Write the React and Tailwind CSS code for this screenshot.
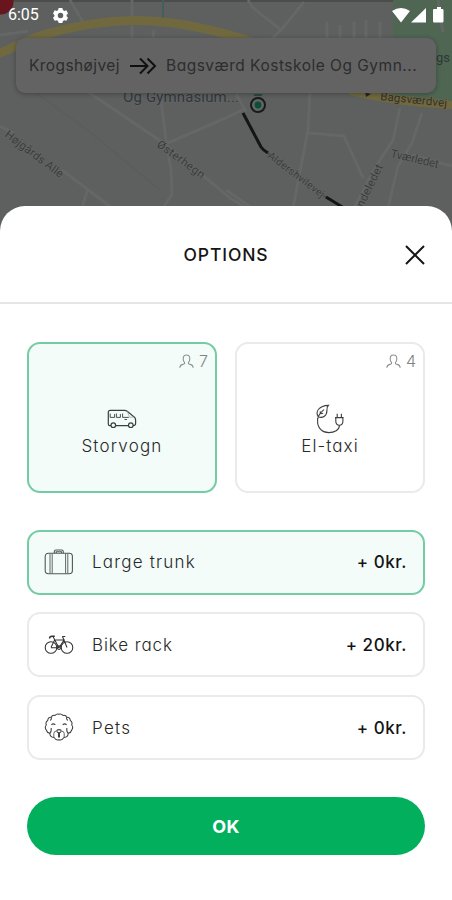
import React, { useState } from "react";
import clsx from "clsx";

const vehicles = [
    { id: "storvogn", name: "Storvogn", seats: 7, icon: VanIcon, text: "tracking-[1.2px]" },
    { id: "el", name: "El-taxi", seats: 4, icon: ElectricIcon, text: "tracking-[1.1px]" },
];

const extras = [
    { id: "trunk", name: "Large trunk", price: 0, icon: TrunkIcon, text: "tracking-[1.2px]" },
    { id: "bike", name: "Bike rack", price: 20, icon: BikeIcon, text: "tracking-[0.9px]" },
    { id: "pets", name: "Pets", price: 0, icon: DogIcon, text: "tracking-[1.3px]" },
];

function VanIcon() {
    return (
        <svg className="mb-[5px]" width="30" height="20" viewBox="0 0 30 20" fill="none" stroke="#3b403e" strokeWidth="1.2">
            <path d="M4 16.6H2.7Q1.3 16.6 1.3 15V3.2Q1.3 1.3 3.2 1.3H17.5Q19 1.3 20.2 2.2L26.2 7.2Q28.6 8.2 28.6 11V14.8Q28.6 16.6 26 16.6M8.6 16.6H21.5" />
            <circle cx="6.3" cy="16.2" r="2.3" />
            <circle cx="23.8" cy="16.2" r="2.3" />
            <path d="M3.2 4.5V8.4H7.6V5M9.4 4.5V8.4H13.4V5M15.6 4.5V8.4H21.8M17.5 10.5H20" strokeWidth="0.9" />
            <path d="M20.2 2.2L22.5 8.2H26.5" stroke="#9ba19e" strokeWidth="0.7" />
        </svg>
    );
}

function ElectricIcon() {
    return (
        <svg width="30" height="30" viewBox="0 0 30 30" fill="none" stroke="#3f3f3f" strokeWidth="1.1">
            <path d="M3.2 12.8C0 7.5 4 1.8 13.4 1.4Q11.6 3.2 11.9 6.5C12 11.5 8 14.6 3.2 12.8M2.6 15C3.4 11.5 5.2 8.5 9 5.6M5.4 9.8L5.2 7.4M5.4 9.8L8.2 9.3" />
            <path d="M2.6 14V17.8C2.6 24 7.5 28.6 13.7 28.6C19.5 28.6 24.4 26 24.4 21.4M20 13.6H28.6M20.8 13.6V17Q20.8 21.2 24.4 21.2Q27.9 21.2 27.9 17V13.6M22.2 13.4V9.8M26.4 13.4V9.8" />
        </svg>
    );
}

function PersonIcon() {
    return (
        <svg width="15" height="15" viewBox="0 0 15 15" fill="none" stroke="#8f9290" strokeWidth="1.1">
            <path d="M.8 13.8Q1 11.1 3.8 10.4L5.5 9.7V8.3Q4.2 7.2 4.2 4.7Q4.2 1 7.5 1T10.8 4.7Q10.8 7.2 9.5 8.3V9.7L11.2 10.4Q14 11.1 14.2 13.8" />
        </svg>
    );
}

function TrunkIcon() {
    return (
        <svg width="30" height="26" viewBox="0 0 30 26" fill="none" stroke="#515754" strokeWidth="1.1">
            <rect x="1.2" y="4.3" width="27.2" height="20.4" rx="3.2" />
            <path d="M6 4.5V24.5M8.2 4.5V24.5M21.6 4.5V24.5M23.8 4.5V24.5" strokeWidth="0.9" />
            <path d="M10.3 4.3V2.8Q10.3 1 12 1H17.6Q19.3 1 19.3 2.8V4.3M12.2 4V2.8H17.4V4" />
        </svg>
    );
}

function BikeIcon() {
    return (
        <svg width="30" height="20" viewBox="0 0 30 20" fill="none" stroke="#333" strokeWidth="1.05">
            <circle cx="7" cy="12.5" r="5.8" />
            <circle cx="23" cy="12.5" r="5.8" />
            <path d="M7 12.5L10.6 5H20L15 12.7H7M8.8 1.2L14.8 12.5M20 5L23 12.5M18.4 1.5L20 5M18.2 1.4H21.3" />
            <path d="M5.5 3.4Q5.5 1.2 8 1.2H10.8" strokeWidth="1.4" />
            <circle cx="15" cy="12.6" r="1.8" />
        </svg>
    );
}

function DogIcon() {
    return (
        <svg className="mb-px" width="30" height="28" viewBox="0 0 30 28" fill="none" stroke="#404040" strokeWidth="1.05">
            <path d="M7.3 4.3Q8.1 1.7 11 2.4Q13 .3 15 1.2Q17 .3 19 2.4Q21.9 1.7 22.7 4.3Q26 4 26.3 7.5Q28.8 9 27.7 12Q29.7 14.5 27.7 17Q27 19.8 24.3 20.3Q24 24.3 20 24.5Q18 27.5 15 26.8Q12 27.5 10 24.5Q6 24.3 5.7 20.3Q3 19.8 2.3 17Q.3 14.5 2.3 12Q1.2 9 3.7 7.5Q4 4 7.3 4.3Z" />
            <path d="M7.3 4.3Q8 6 6.3 7.5M22.7 4.3Q22 6 23.7 7.5M7.4 11.8Q9.2 9.9 11.3 11.8M18.7 11.8Q20.8 9.9 22.6 11.8M5.8 20.3Q7.6 19 7.2 15M24.2 20.3Q22.4 19 22.8 15" />
            <path d="M9.8 24.3V20.5Q9.8 18.3 12.4 18M20.2 24.3V20.5Q20.2 18.3 17.6 18" strokeWidth="0.8" />
            <path d="M12.8 18Q12.8 16.6 15 16.6T17.2 18Q17 19.8 15 19.8T12.8 18Z" />
            <path d="M15 19.8V24.6" strokeWidth="2" />
        </svg>
    );
}

function MapBackdrop() {
    return (
        <svg className="absolute inset-0" width="452" height="236" viewBox="0 0 452 236" fill="none">
            <rect width="452" height="236" fill="#5e5f5f" />
            <rect width="452" height="2" fill="#4c4c4c" />
            <path d="M393 0H452V107L434 102L393 95Z" fill="#4f6653" />
            {/* Minor roads */}
            <g stroke="#656666" strokeWidth="3">
                <path d="M0 35L28 31M70 0L83 22M132 0V38M154 30L150 60M248 0L252 7L281 30L304 2M281 30L268 42M438 0L443 32" />
                <path d="M88 92L165 144L230 198L250 210M0 126L14 133M62 170L112 208M88 188L82 208M160 92L166 140L171 170L172 194L162 210M168 143L226 118L246 108" />
                <path d="M310 92L308 130L293 208M308 133L344 136L363 178M400 108L393 140L375 168L354 208M422 113L412 143L398 166L388 208M412 155L452 166M236 94L246 112M226 190L252 208" />
                <path d="M327 22V38M340 25V38M354 22V38M366 20V38M380 22V38" />
            </g>
            <path d="M35 92L90 132L160 190" stroke="#5b5c5c" strokeWidth="1.5" />
            <path d="M163 0V20" stroke="#42605b" strokeWidth="2" />
            {/* Main road */}
            <path d="M-2 54Q20 44 40 36Q100 18 150 21Q190 23 240 38L280 52" stroke="#706940" strokeWidth="9" />
            <path d="M350 91Q400 103 452 105" stroke="#706940" strokeWidth="8" />
            <circle cx="1" cy="2" r="12.5" fill="#68151d" />
            {/* Route */}
            <path d="M243 113L261 147Q263 150 268 153" stroke="#151515" strokeWidth="3" />
            <path d="M268 153L328 199" stroke="#4e4e4e" strokeWidth="2" />
            <path d="M326 197L344 208" stroke="#151515" strokeWidth="3" />
            <circle cx="258" cy="105" r="7" stroke="#191b1a" strokeWidth="2" fill="#5e6763" />
            <circle cx="258" cy="105" r="3.4" fill="#0d4d36" />
            <path d="M254 94H262V96H254Z" fill="#294b3f" />
            <g className="font-['Roboto',sans-serif]" fill="#3b3c3d" stroke="#646565" strokeWidth="1.5" paintOrder="stroke">
                <text x="123" y="102" fontSize="15" fill="#30383b" textLength="116">Og Gymnasium...</text>
                <text transform="translate(4 136) rotate(37)" fontSize="11.5" textLength="70">Højgårds Alle</text>
                <text transform="translate(156 146) rotate(36)" fontSize="11.5" textLength="56">Østerhegn</text>
                <text transform="translate(267 157) rotate(37)" fontSize="10.5" textLength="68">Aldershvilevej</text>
                <text transform="translate(390 157) rotate(13)" fontSize="11.5" textLength="49">Tværledet</text>
                <text transform="translate(363 208) rotate(-64)" fontSize="11.5" textLength="46">ndeledet</text>
                <text transform="translate(380 100) rotate(6)" fontSize="11.5" fill="#33302b" stroke="#706940" textLength="67">Bagsværdvej</text>
                <text x="436" y="62" fontSize="13" fill="#303739" stroke="none">gs</text>
            </g>
            <path d="M365 92L371 94L366 97" fill="#282822" />
        </svg>
    );
}

function StatusBar() {
    return (
        <div className="flex h-[30px] items-center justify-between px-[8px] text-white">
            <div className="flex items-center gap-[14px]">
                <span className="font-['Roboto',sans-serif] text-[16px] leading-none">6:05</span>
                <svg width="15" height="15" viewBox="0 0 24 24" fill="currentColor">
                    <path fillRule="evenodd" d="M9 0h6l.8 3.3 2.3 1.3L21.3 3.6 24 8.6 21.7 11v2L24 15.4l-2.7 5-3.2-1-2.3 1.3L15 24H9l-.8-3.3-2.3-1.3-3.2 1L0 15.4 2.3 13v-2L0 8.6l2.7-5 3.2 1 2.3-1.3ZM12 7.6a4.4 4.4 0 1 0 0 8.8 4.4 4.4 0 0 0 0-8.8Z" />
                </svg>
            </div>
            <svg width="52" height="17" viewBox="0 0 52 17" fill="currentColor">
                <path d="M0 4Q9 -2 18 4L9 15.5Z" />
                <path d="M34 1V15.5H19Z" />
                <path d="M43.8 2H45V0H49V2H50.2Q51.5 2 51.5 3.2V14.3Q51.5 15.5 50.3 15.5H42.2Q41 15.5 41 14.3V3.2Q41 2 42.2 2Z" />
            </svg>
        </div>
    );
}

function RouteBar() {
    return (
        <div className="mx-4 mt-[8px] flex h-[55px] items-center rounded-[9px] bg-[#636363] pl-[13px] text-[15.5px] text-[#2d2d2d] shadow-[0_1px_5px_rgba(0,0,0,0.3)]">
            <span className="w-[101px] tracking-[0.4px]">Krogshøjvej</span>
            <svg width="27" height="18" viewBox="0 0 27 18" fill="none" stroke="#111" strokeWidth="2">
                <path d="M0 9H17M10 1.5L17.5 9L10 16.5M17.5 1.5L25 9L17.5 16.5" />
            </svg>
            <span className="ml-[9px] whitespace-nowrap tracking-[0.5px]">Bagsværd Kostskole Og Gymn...</span>
        </div>
    );
}

function VehicleCard({ vehicle, active, onSelect }) {
    const Icon = vehicle.icon;
    return (
        <button
            type="button"
            onClick={onSelect}
            className={clsx(
                "flex h-[151px] flex-col items-center rounded-[13px] border-2",
                active ? "border-[#74cca3] bg-[#f4fcf9]" : "border-[#eaeaea] bg-white"
            )}
        >
            <div className="flex h-[35px] w-full items-center justify-end gap-[5px] pr-[7px] text-[16px] font-light text-[#808381]">
                <PersonIcon />
                {vehicle.seats}
            </div>
            <div className="mt-[24px] flex h-[31px] items-end">
                <Icon />
            </div>
            <span className={clsx("text-[17px] font-light leading-[24px] text-[#272a29]", vehicle.text)}>
                {vehicle.name}
            </span>
        </button>
    );
}

function ExtraRow({ extra, active, onToggle }) {
    const Icon = extra.icon;
    return (
        <button
            type="button"
            onClick={onToggle}
            className={clsx(
                "flex h-[65px] items-center rounded-[13px] border-2 pl-[15px] pr-[16px]",
                active ? "border-[#74cca3] bg-[#f4fcf9]" : "border-[#eaeaea] bg-white"
            )}
        >
            <Icon />
            <span className={clsx("ml-[18px] pt-[2px] text-[17px] font-light text-[#272a29]", extra.text)}>
                {extra.name}
            </span>
            <span className="ml-auto pt-[2px] text-[17px] font-medium tracking-[0.55px] text-[#151515]">
                + {extra.price}kr.
            </span>
        </button>
    );
}

export default function App() {
    const [vehicle, setVehicle] = useState("storvogn");
    const [selected, setSelected] = useState(["trunk"]);

    const toggle = (id) =>
        setSelected(selected.includes(id) ? selected.filter((s) => s !== id) : [...selected, id]);

    return (
        <div className="flex h-[900px] w-[452px] flex-col overflow-hidden bg-white font-['Inter',sans-serif] [font-feature-settings:'cv11']">
            <div className="relative h-[206px] shrink-0">
                <MapBackdrop />
                <div className="relative">
                    <StatusBar />
                    <RouteBar />
                </div>
            </div>

            {/* Options sheet */}
            <div className="relative flex grow flex-col rounded-t-[25px] bg-white">
                <header className="grid h-[98px] shrink-0 grid-cols-[1fr_auto_1fr] items-center border-b-2 border-[#e6e6e6] px-[27px]">
                    <span />
                    <h1 className="pt-[2px] text-[17.5px] font-medium tracking-[0.9px] text-[#151515]">OPTIONS</h1>
                    <button type="button" aria-label="Close" className="justify-self-end pt-[2px]">
                        <svg width="20" height="20" viewBox="0 0 20 20" fill="none" stroke="#151515" strokeWidth="2">
                            <path d="M1 1L19 19M19 1L1 19" />
                        </svg>
                    </button>
                </header>

                <div className="flex flex-col px-[27px] pt-[37.5px]">
                    <div className="grid grid-cols-2 gap-[18px]">
                        {vehicles.map((v) => (
                            <VehicleCard
                                key={v.id}
                                vehicle={v}
                                active={vehicle === v.id}
                                onSelect={() => setVehicle(v.id)}
                            />
                        ))}
                    </div>

                    <div className="mt-[37px] flex flex-col gap-[17.75px]">
                        {extras.map((e) => (
                            <ExtraRow
                                key={e.id}
                                extra={e}
                                active={selected.includes(e.id)}
                                onToggle={() => toggle(e.id)}
                            />
                        ))}
                    </div>

                    <button
                        type="button"
                        className="mt-[37px] h-[58px] rounded-full bg-[#02af5d] text-[18px] font-bold tracking-[0.4px] text-white"
                    >
                        OK
                    </button>
                </div>
            </div>
        </div>
    );
}
